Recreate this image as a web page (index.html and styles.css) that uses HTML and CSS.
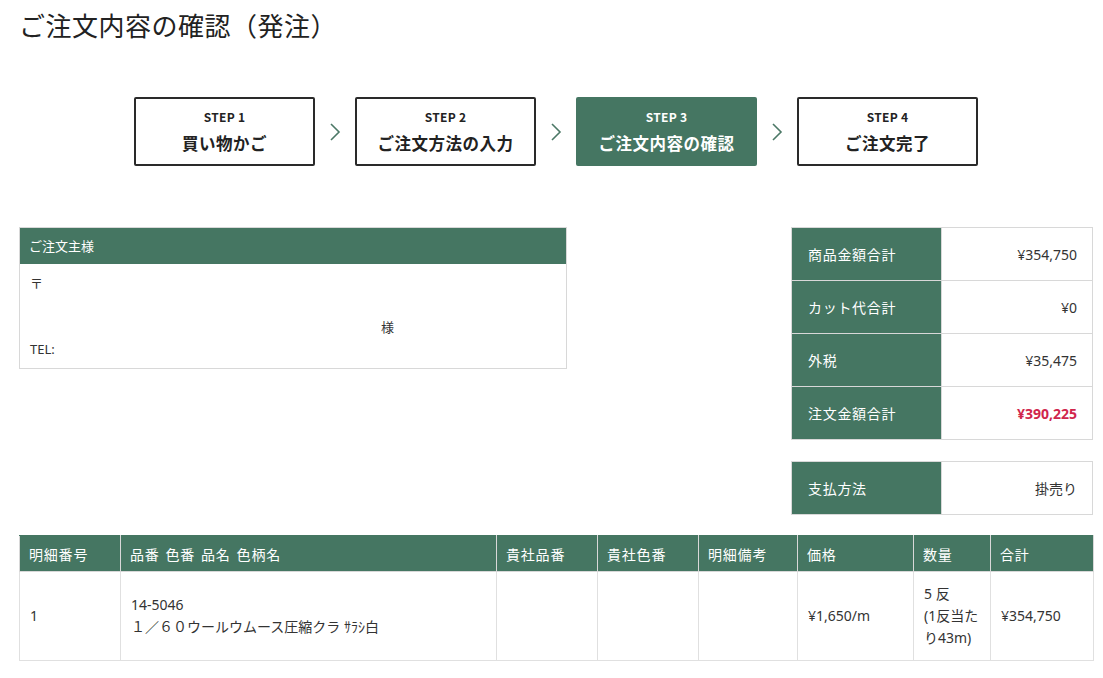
FILE: index.html
```html
<!DOCTYPE html>
<html lang="ja">
<head>
<meta charset="utf-8">
<title>ご注文内容の確認（発注）</title>
<link rel="stylesheet" href="styles.css">
</head>
<body>
<div class="page">
  <h1 class="title">ご注文内容の確認（発注）</h1>

  <div class="steps">
    <div class="step">
      <div class="step-no">STEP 1</div>
      <div class="step-name">買い物かご</div>
    </div>
    <svg class="chev" width="12" height="20" viewBox="0 0 12 20"><polyline points="2,2 10,10 2,18" fill="none" stroke="#4b7866" stroke-width="1.6"/></svg>
    <div class="step">
      <div class="step-no">STEP 2</div>
      <div class="step-name">ご注文方法の入力</div>
    </div>
    <svg class="chev" width="12" height="20" viewBox="0 0 12 20"><polyline points="2,2 10,10 2,18" fill="none" stroke="#4b7866" stroke-width="1.6"/></svg>
    <div class="step step-active">
      <div class="step-no">STEP 3</div>
      <div class="step-name">ご注文内容の確認</div>
    </div>
    <svg class="chev" width="12" height="20" viewBox="0 0 12 20"><polyline points="2,2 10,10 2,18" fill="none" stroke="#4b7866" stroke-width="1.6"/></svg>
    <div class="step">
      <div class="step-no">STEP 4</div>
      <div class="step-name">ご注文完了</div>
    </div>
  </div>

  <div class="middle">
    <div class="customer">
      <div class="customer-head">ご注文主様</div>
      <div class="customer-body">
        <div class="line">〒</div>
        <div class="line line-empty"></div>
        <div class="line line-sama"><span class="sama">様</span></div>
        <div class="line">TEL:</div>
      </div>
    </div>

    <div class="side">
      <table class="sum">
        <tr><th>商品金額合計</th><td>¥354,750</td></tr>
        <tr><th>カット代合計</th><td>¥0</td></tr>
        <tr><th>外税</th><td>¥35,475</td></tr>
        <tr><th>注文金額合計</th><td class="total">¥390,225</td></tr>
      </table>
      <table class="sum pay">
        <tr><th>支払方法</th><td>掛売り</td></tr>
      </table>
    </div>
  </div>

  <table class="items">
    <colgroup>
      <col class="c1"><col class="c2"><col class="c3"><col class="c4"><col class="c5"><col class="c6"><col class="c7"><col class="c8">
    </colgroup>
    <thead>
      <tr>
        <th>明細番号</th><th>品番 色番 品名 色柄名</th><th>貴社品番</th><th>貴社色番</th><th>明細備考</th><th>価格</th><th>数量</th><th>合計</th>
      </tr>
    </thead>
    <tbody>
      <tr>
        <td>1</td>
        <td>14-5046<br>１／６０ウールウムース圧縮クラ ｻﾗｼ白</td>
        <td></td><td></td><td></td>
        <td>¥1,650/m</td>
        <td>5 反<br>(1反当たり43m)</td>
        <td>¥354,750</td>
      </tr>
    </tbody>
  </table>
</div>
</body>
</html>
```

FILE: styles.css
```css
* { box-sizing: border-box; }
html, body { margin: 0; padding: 0; background: #fff; }
body {
  font-family: "Noto Sans", "Noto Sans CJK JP", sans-serif;
  color: #333;
  font-size: 14px;
}
.page {
  width: 1074px;
  margin-left: 19px;
}
.title {
  margin: 0;
  padding-top: 7px;
  font-family: "Noto Sans CJK JP", sans-serif;
  font-size: 26px;
  font-weight: 400;
  line-height: 36px;
  color: #222;
  letter-spacing: 0.5px;
}
.steps {
  display: flex;
  justify-content: center;
  align-items: center;
  gap: 14px;
  margin-top: 54px;
}
.step {
  width: 181px;
  height: 69px;
  border: 2px solid #2a2a2a;
  border-radius: 2px;
  display: flex;
  flex-direction: column;
  align-items: center;
  justify-content: center;
  font-family: "Noto Sans CJK JP", sans-serif;
  color: #222;
  background: #fff;
}
.step-active {
  background: #457662;
  border-color: #457662;
  color: #fff;
}
.step-no {
  font-size: 12px;
  font-weight: 700;
  line-height: 16px;
  letter-spacing: 0.3px;
}
.step-name {
  font-size: 16.5px;
  font-weight: 700;
  line-height: 22px;
  margin-top: 7px;
  letter-spacing: 0.5px;
}
.chev { display: block; flex: none; }

.middle {
  display: flex;
  justify-content: space-between;
  align-items: flex-start;
  margin-top: 61px;
}
.customer {
  width: 548px;
  border: 1px solid #d8d8d8;
}
.customer-head {
  background: #457662;
  color: #fff;
  height: 36px;
  line-height: 36px;
  padding-left: 9px;
  font-size: 13px;
  font-family: "Noto Sans CJK JP", sans-serif;
}
.customer-body {
  padding: 8px 12px 8px 10px;
}
.line {
  height: 22px;
  line-height: 22px;
  font-size: 13px;
  color: #333;
}
.line-sama { padding-left: 351px; }

.side {
  width: 302px;
  display: flex;
  flex-direction: column;
  gap: 21px;
}
.sum {
  width: 302px;
  border-collapse: collapse;
  table-layout: fixed;
}
.sum th {
  width: 150px;
  background: #457662;
  color: #fff;
  font-weight: 400;
  text-align: left;
  padding: 0 0 0 16px;
  height: 53px;
  border: 1px solid #d8d8d8;
  font-size: 14px;
  font-family: "Noto Sans CJK JP", sans-serif;
  letter-spacing: 0.7px;
}
.sum td {
  text-align: right;
  padding: 0 15px 0 0;
  border: 1px solid #d8d8d8;
  height: 53px;
  font-size: 14px;
  color: #333;
}
.sum .total { color: #d0254c; font-weight: 700; }
.pay th, .pay td { height: 53px; }

.items {
  width: 1074px;
  margin-top: 20px;
  border-collapse: collapse;
  table-layout: fixed;
}
.c1 { width: 101px; }
.c2 { width: 376px; }
.c3 { width: 101px; }
.c4 { width: 101px; }
.c5 { width: 99px; }
.c6 { width: 116px; }
.c7 { width: 77px; }
.c8 { width: 103px; }
.items th {
  background: #457662;
  color: #fff;
  font-weight: 400;
  text-align: left;
  height: 36px;
  padding: 0 9px;
  border: 1px solid #d8d8d8;
  border-top-color: #457662;
  font-size: 14px;
  letter-spacing: 0.8px;
  word-spacing: 2px;
  font-family: "Noto Sans CJK JP", sans-serif;
}
.items td {
  border: 1px solid #e0e0e0;
  height: 89px;
  padding: 0 10px;
  font-size: 14px;
  line-height: 22px;
  color: #333;
    vertical-align: middle;
}
```
